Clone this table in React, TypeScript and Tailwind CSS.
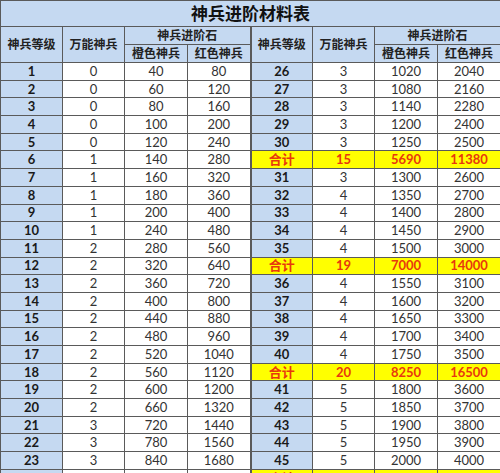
import React from "react";

type Row = { lv: string; a: string; b: string; c: string; total?: boolean };

const left: Row[] = [
  ["1", "0", "40", "80"],
  ["2", "0", "60", "120"],
  ["3", "0", "80", "160"],
  ["4", "0", "100", "200"],
  ["5", "0", "120", "240"],
  ["6", "1", "140", "280"],
  ["7", "1", "160", "320"],
  ["8", "1", "180", "360"],
  ["9", "1", "200", "400"],
  ["10", "1", "240", "480"],
  ["11", "2", "280", "560"],
  ["12", "2", "320", "640"],
  ["13", "2", "360", "720"],
  ["14", "2", "400", "800"],
  ["15", "2", "440", "880"],
  ["16", "2", "480", "960"],
  ["17", "2", "520", "1040"],
  ["18", "2", "560", "1120"],
  ["19", "2", "600", "1200"],
  ["20", "2", "660", "1320"],
  ["21", "3", "720", "1440"],
  ["22", "3", "780", "1560"],
  ["23", "3", "840", "1680"],
  ["24", "3", "900", "1800"],
].map(([lv, a, b, c]) => ({ lv, a, b, c }));

const right: Row[] = [
  ["26", "3", "1020", "2040"],
  ["27", "3", "1080", "2160"],
  ["28", "3", "1140", "2280"],
  ["29", "3", "1200", "2400"],
  ["30", "3", "1250", "2500"],
  ["合计", "15", "5690", "11380", "t"],
  ["31", "3", "1300", "2600"],
  ["32", "4", "1350", "2700"],
  ["33", "4", "1400", "2800"],
  ["34", "4", "1450", "2900"],
  ["35", "4", "1500", "3000"],
  ["合计", "19", "7000", "14000", "t"],
  ["36", "4", "1550", "3100"],
  ["37", "4", "1600", "3200"],
  ["38", "4", "1650", "3300"],
  ["39", "4", "1700", "3400"],
  ["40", "4", "1750", "3500"],
  ["合计", "20", "8250", "16500", "t"],
  ["41", "5", "1800", "3600"],
  ["42", "5", "1850", "3700"],
  ["43", "5", "1900", "3800"],
  ["44", "5", "1950", "3900"],
  ["45", "5", "2000", "4000"],
  ["合计", "25", "9750", "19500", "t"],
].map(([lv, a, b, c, t]) => ({ lv, a, b, c, total: !!t }));

const font = { fontFamily: 'Lato, "Noto Sans CJK SC", sans-serif' };

function Cells({ r, first }: { r: Row; first?: boolean }) {
  if (r.total) {
    const cls =
      "border border-[#5a5a5a] bg-[#ffff00] text-[#e8380d] font-bold text-center text-[13px] leading-none p-0";
    return (
      <>
        <td className={cls + " border-l-2"}>{r.lv}</td>
        <td className={cls}>{r.a}</td>
        <td className={cls}>{r.b}</td>
        <td className={cls}>{r.c}</td>
      </>
    );
  }
  const base = "border border-[#5a5a5a] text-center text-[13px] leading-none p-0";
  return (
    <>
      <td
        className={
          base +
          " bg-[#c5d9f1] font-bold text-[#1a1a1a]" +
          (first ? "" : " border-l-2")
        }
      >
        {r.lv}
      </td>
      <td className={base + " bg-white text-[#333]"}>{r.a}</td>
      <td className={base + " bg-white text-[#333]"}>{r.b}</td>
      <td className={base + " bg-white text-[#333]"}>{r.c}</td>
    </>
  );
}

function HeaderHalf({ first }: { first?: boolean }) {
  const h =
    "border border-[#5a5a5a] bg-[#c5d9f1] text-center text-[12px] font-bold text-[#222] leading-none p-0";
  return (
    <>
      <td rowSpan={2} className={h + (first ? "" : " border-l-2")}>
        神兵等级
      </td>
      <td rowSpan={2} className={h}>
        万能神兵
      </td>
      <td colSpan={2} className={h}>
        神兵进阶石
      </td>
    </>
  );
}

export default function App() {
  return (
    <div className="w-[500px] h-[473px] overflow-hidden bg-white" style={font}>
      <table className="w-[500px] table-fixed border-collapse">
        <colgroup>
          <col className="w-[62px]" />
          <col className="w-[62px]" />
          <col className="w-[63px]" />
          <col className="w-[63px]" />
          <col className="w-[62px]" />
          <col className="w-[62px]" />
          <col className="w-[63px]" />
          <col className="w-[63px]" />
        </colgroup>
        <tbody>
          <tr className="h-[26px]">
            <td
              colSpan={8}
              className="border border-[#5a5a5a] bg-[#c5d9f1] text-center text-[17px] font-bold text-[#111] leading-none p-0"
            >
              神兵进阶材料表
            </td>
          </tr>
          <tr className="h-[18px]">
            <HeaderHalf first />
            <HeaderHalf />
          </tr>
          <tr className="h-[18px]">
            <td className="border border-[#5a5a5a] bg-[#c5d9f1] text-center text-[12px] font-bold text-[#222] leading-none p-0">
              橙色神兵
            </td>
            <td className="border border-[#5a5a5a] bg-[#c5d9f1] text-center text-[12px] font-bold text-[#222] leading-none p-0">
              红色神兵
            </td>
            <td className="border border-[#5a5a5a] bg-[#c5d9f1] text-center text-[12px] font-bold text-[#222] leading-none p-0">
              橙色神兵
            </td>
            <td className="border border-[#5a5a5a] bg-[#c5d9f1] text-center text-[12px] font-bold text-[#222] leading-none p-0">
              红色神兵
            </td>
          </tr>
          {left.map((l, i) => (
            <tr key={i} className="h-[17.7px]">
              <Cells r={l} first />
              <Cells r={right[i]} />
            </tr>
          ))}
        </tbody>
      </table>
    </div>
  );
}
